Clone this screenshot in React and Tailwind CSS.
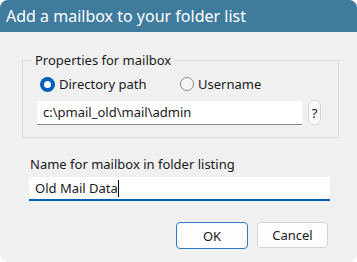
import { useState } from "react";

const Radio = ({ checked, label, onClick, className }) => (
  <label className={"flex items-center gap-[4px] " + (className || "")} onClick={onClick}>
    {checked ? (
      <span className="flex h-[15px] w-[15px] items-center justify-center rounded-full bg-[#005fb8]">
        <span className="h-[7px] w-[7px] rounded-full bg-white" />
      </span>
    ) : (
      <span className="h-[14px] w-[14px] rounded-full border border-[#8a8a8a] bg-[#f6f6f6]" />
    )}
    <span className="text-[#1a1a1a]">{label}</span>
  </label>
);

const App = () => {
  const [Mode, setMode] = useState("dir");
  const [Path, setPath] = useState("c:\\pmail_old\\mail\\admin");

  return (
    <div className="h-[262px] w-[357px] bg-white font-['Noto_Sans',sans-serif] text-[13px] leading-[16px]">
      <div className="flex h-full flex-col overflow-hidden rounded-[8px] bg-[#f0f0f0]">
        {/* title bar */}
        <div className="flex h-[32px] items-center bg-[#3e7b9d] pl-[6px] text-[16px] text-white">
          Add a mailbox to your folder list
        </div>

        {/* properties group */}
        <fieldset className="ml-[22px] mr-[18px] mt-[20px] border border-[#dcdcdc] pb-[12px] pl-[14px] pr-[17px]">
          <legend className="-ml-[5px] px-[3px] text-[#1a1a1a]">Properties for mailbox</legend>
          <div className="mt-[8px] flex h-[16px] items-center pl-[3px]">
            <Radio
              className="w-[140px]"
              checked={Mode === "dir"}
              label="Directory path"
              onClick={() => setMode("dir")}
            />
            <Radio checked={Mode === "user"} label="Username" onClick={() => setMode("user")} />
          </div>
          <div className="mt-[8px] flex items-center gap-[6px]">
            <div className="flex h-[24px] flex-1 items-center border-b border-[#8a8a8a] bg-white pl-[6px] text-[#1a1a1a]">
              {Path}
            </div>
            <button className="flex h-[25px] w-[13px] items-center justify-center rounded-[6px] border border-[#d6d6d6] bg-[#fbfbfb] text-[#1a1a1a]">
              ?
            </button>
          </div>
        </fieldset>

        {/* folder listing name */}
        <div className="ml-[30px] mt-[18px] text-[#1a1a1a]">Name for mailbox in folder listing</div>
        <div className="ml-[29px] mr-[27px] mt-[5px] flex h-[24px] items-center border-b-2 border-[#005fb8] bg-white pl-[6px] text-[#1a1a1a]">
          Old Mail Data
          <span className="h-[17px] w-[1px] bg-black" />
        </div>

        {/* buttons */}
        <div className="mr-[29px] mt-[21px] flex justify-end gap-[9px]">
          <button className="h-[27px] w-[72px] rounded-[4px] border border-[#2b78cf] bg-[#fdfdfd] text-[#1a1a1a]">
            OK
          </button>
          <button className="h-[26px] w-[71px] rounded-[4px] border border-[#d3d3d3] bg-[#fdfdfd] text-[#1a1a1a]">
            Cancel
          </button>
        </div>
      </div>
    </div>
  );
};
export default App;
